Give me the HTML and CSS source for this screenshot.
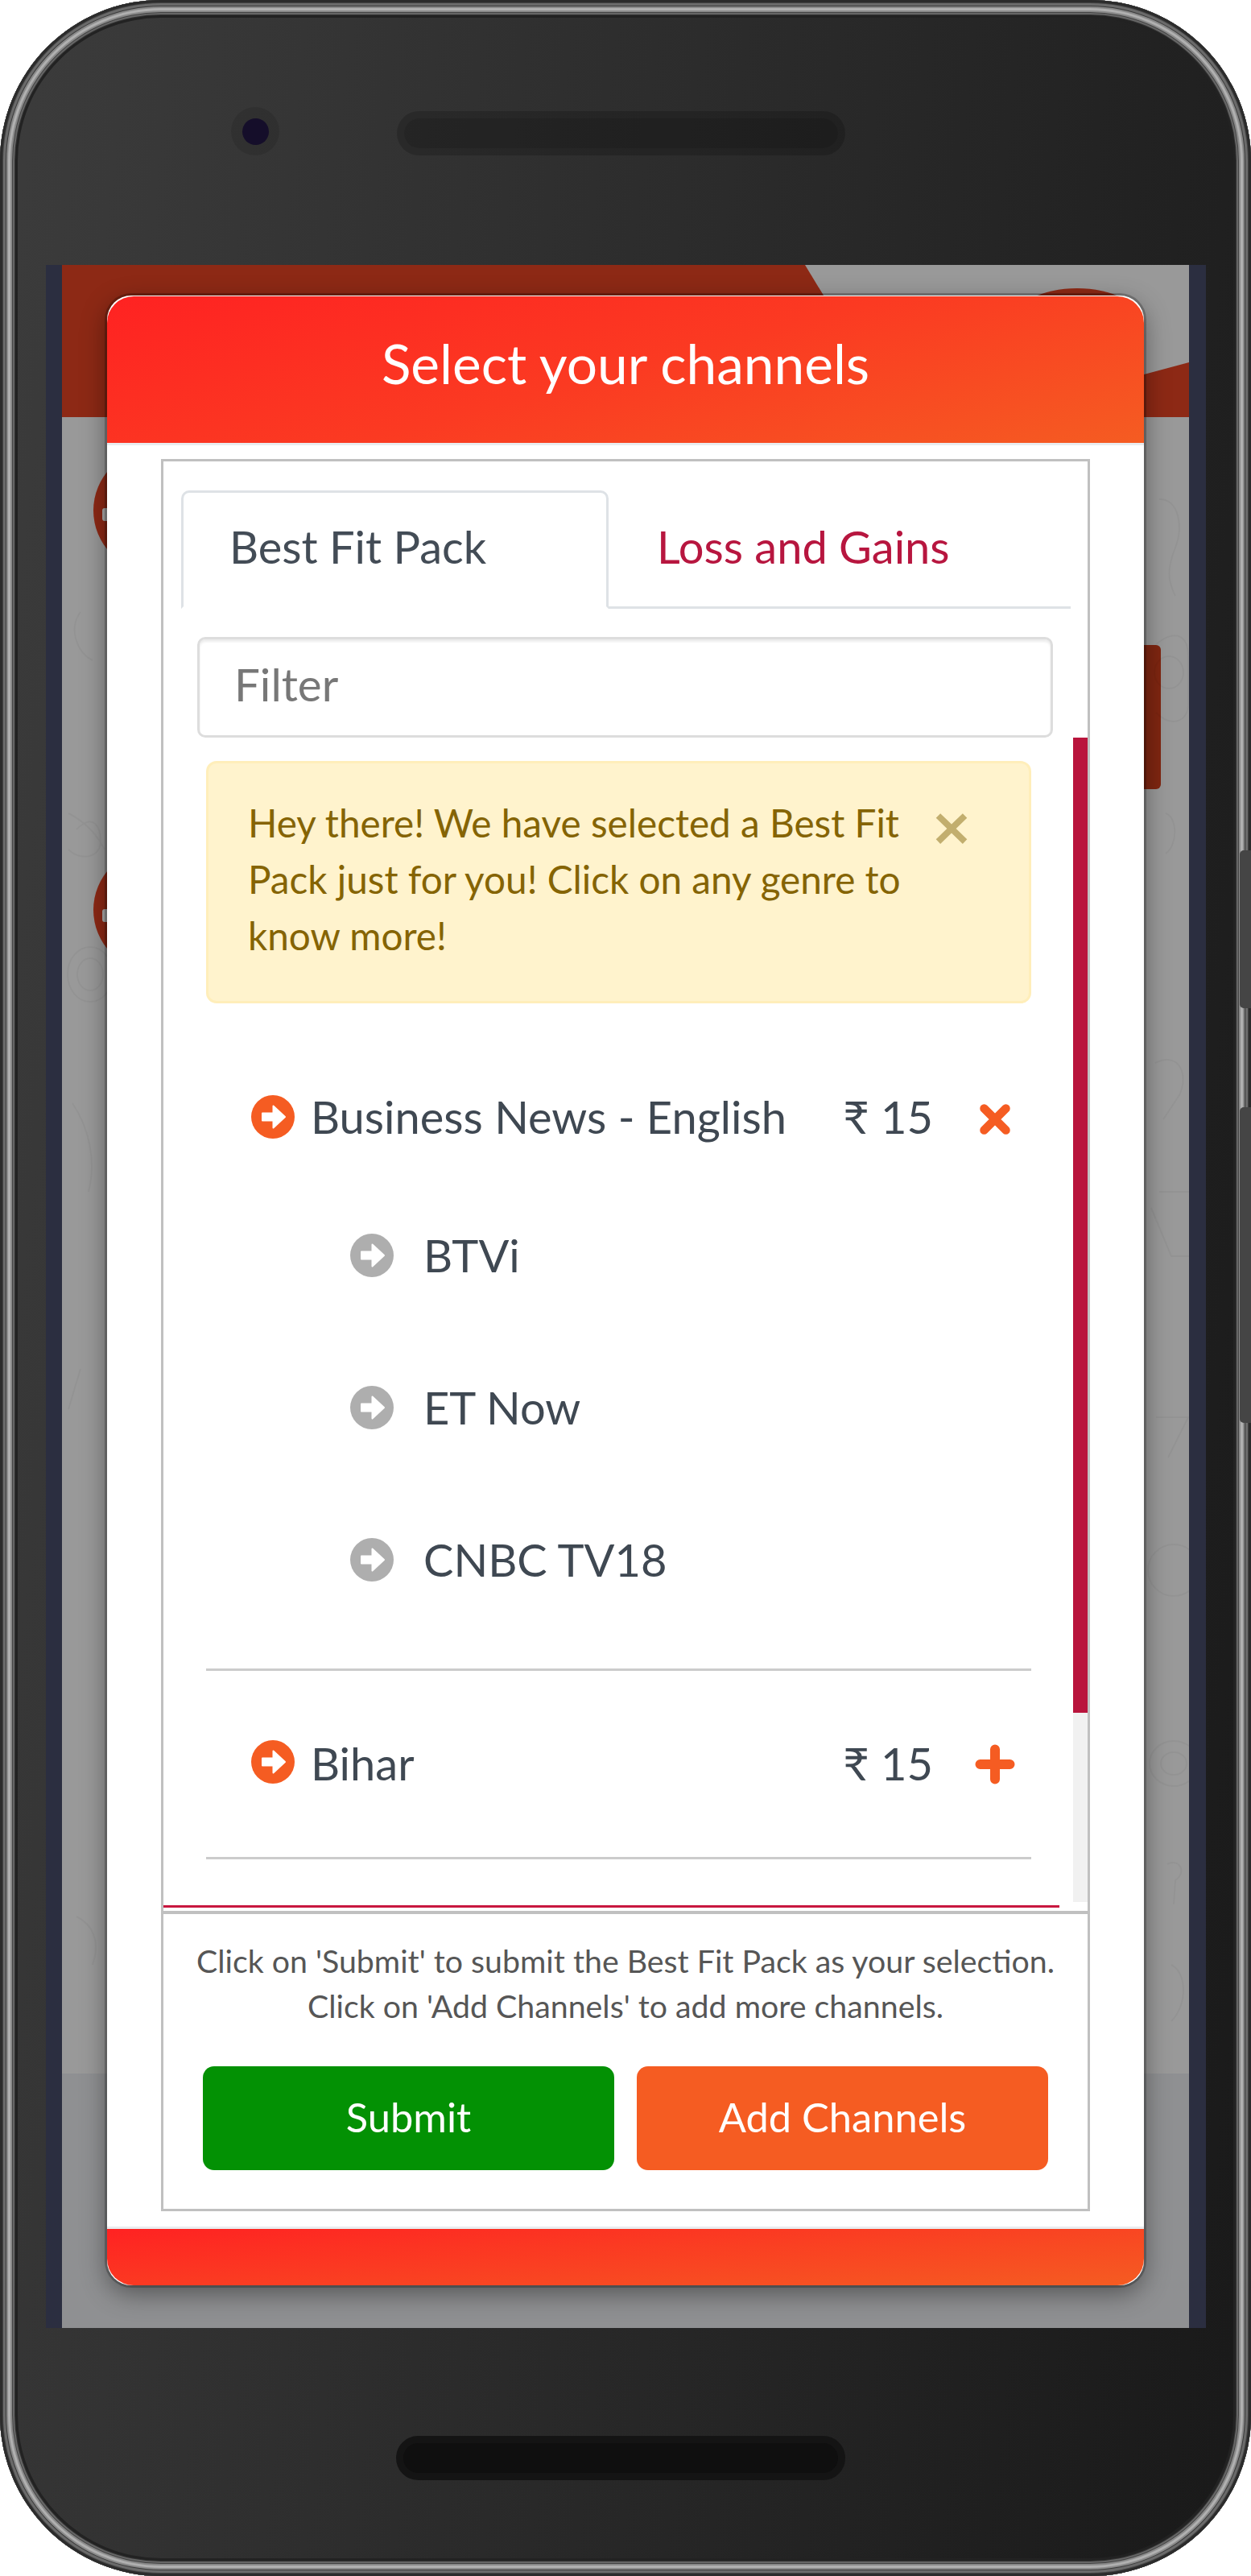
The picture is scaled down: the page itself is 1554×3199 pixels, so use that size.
FILE: index.html
```html
<!DOCTYPE html>
<html lang="en">
<head>
<meta charset="utf-8">
<title>Select your channels</title>
<link rel="stylesheet" href="styles.css">
</head>
<body>
<svg class="defs" width="0" height="0" aria-hidden="true">
  <symbol id="arrow" viewBox="0 0 54 54">
    <circle cx="27" cy="27" r="27" fill="currentColor"/>
    <path d="M14 22.5H27.5V13.5L42 27L27.5 40.5V31.5H14Z" fill="#fff" stroke="#fff" stroke-width="2" stroke-linejoin="round"/>
  </symbol>
  <symbol id="times" viewBox="0 0 40 40">
    <path d="M6.5 6.5L33.500 33.500M33.500 6.500L6.500 33.500" fill="none" stroke="currentColor" stroke-width="10.500" stroke-linecap="round"/>
  </symbol>
  <symbol id="plus" viewBox="0 0 50 50">
    <path d="M6.500 25H43.500M25 6.500V43.500" fill="none" stroke="currentColor" stroke-width="12" stroke-linecap="round"/>
  </symbol>
</svg>

<div class="phone">
  <div class="side-key side-key-a"></div>
  <div class="side-key side-key-b"></div>

  <div class="bezel-top">
    <div class="camera"><div class="lens"></div></div>
    <div class="speaker"></div>
  </div>

  <div class="screen">
    <svg class="backdrop" viewBox="77 329 1400 2562" aria-hidden="true">
      <rect x="77" y="329" width="1400" height="2562" fill="#999"/>
      <rect x="77" y="2575" width="1400" height="316" fill="#8f9092"/>
      <rect x="77" y="329" width="1400" height="189" fill="#8d2915"/>
      <polygon points="1000,329 1477,329 1477,450 1130,543" fill="#999"/>
      <ellipse cx="1338" cy="400" rx="80" ry="42" fill="#8d2915"/>
      <circle cx="192" cy="634" r="76" fill="#8d2915"/>
      <circle cx="192" cy="1130" r="76" fill="#8d2915"/>
      <rect x="127" y="631" width="10" height="16" rx="3" fill="#aaa"/>
      <rect x="127" y="1129" width="10" height="16" rx="3" fill="#aaa"/>
      <rect x="1400" y="801" width="42" height="179" rx="6" fill="#7f2611"/>
      <g fill="none" stroke="#000" stroke-opacity=".035" stroke-width="2">
        <path d="M85 1010c20 10 35 25 45 45M100 760c-15 20-5 50 15 60M95 1030c20-20 30-5 30 15s-25 25-40 10"/>
        <ellipse cx="112" cy="1210" rx="28" ry="34"/>
        <ellipse cx="112" cy="1210" rx="16" ry="20"/>
        <path d="M90 1370c20 30 30 70 20 110M100 1700l-15 50M95 2380c20 10 30 30 20 60"/>
        <path d="M1440 620c25 0 30 35 20 60s-10 40 0 60"/>
        <path d="M1436 800c25-20 40-10 40 15v60c0 20-20 30-40 10"/>
        <ellipse cx="1452" cy="835" rx="18" ry="20"/>
        <path d="M1448 1010c15 5 15 40 0 50M1435 1320c30-15 42 15 30 40l-20 30"/>
        <path d="M1440 1480h40M1430 1500l25 60h25M1436 1760h40l-25 50"/>
        <ellipse cx="1458" cy="1950" rx="32" ry="32"/>
        <ellipse cx="1458" cy="2190" rx="30" ry="28"/>
        <ellipse cx="1458" cy="2190" rx="16" ry="14"/>
        <path d="M1455 2440c20 10 20 50 0 70M1450 2315c15-8 25 10 10 20l-2 30"/>
      </g>
    </svg>

    <div class="modal">
      <header class="modal-head">Select your channels</header>
      <div class="modal-body">
        <section class="box">
          <nav class="tabs">
            <a class="tab tab-active">Best Fit Pack</a>
            <a class="tab">Loss and Gains</a>
          </nav>
          <input class="filter" type="text" placeholder="Filter">
          <div class="list">
            <div class="alert">
              <p class="alert-text">Hey there! We have selected a Best Fit Pack just for you! Click on any genre to know more!</p>
              <svg class="alert-close" viewBox="0 0 40 40" aria-hidden="true"><path d="M3 3L37 36M37 3L3 36"/></svg>
            </div>

            <div class="row row-first">
              <svg class="dot"><use href="#arrow"/></svg>
              <span class="row-name">Business News - English</span>
              <span class="price">₹ 15</span>
              <svg class="action action-times"><use href="#times"/></svg>
            </div>
            <div class="sub"><svg class="dot dot-grey"><use href="#arrow"/></svg><span>BTVi</span></div>
            <div class="sub"><svg class="dot dot-grey"><use href="#arrow"/></svg><span>ET Now</span></div>
            <div class="sub"><svg class="dot dot-grey"><use href="#arrow"/></svg><span>CNBC TV18</span></div>
            <hr class="rule rule-first">
            <div class="row row-second">
              <svg class="dot"><use href="#arrow"/></svg>
              <span class="row-name">Bihar</span>
              <span class="price">₹ 15</span>
              <svg class="action"><use href="#plus"/></svg>
            </div>
            <hr class="rule">

            <div class="scroll-y"><div class="scroll-y-thumb"></div></div>
            <div class="scroll-x"></div>
          </div>
          <footer class="box-foot">
            <p class="hint">Click on 'Submit' to submit the Best Fit Pack as your selection.<br>Click on 'Add Channels' to add more channels.</p>
            <div class="actions">
              <button class="btn btn-green">Submit</button>
              <button class="btn btn-orange">Add Channels</button>
            </div>
          </footer>
        </section>
      </div>
      <div class="modal-foot"></div>
    </div>
  </div>

  <div class="bezel-bottom">
    <div class="speaker speaker-low"></div>
  </div>
</div>
</body>
</html>
```

FILE: styles.css
```css
* { box-sizing: border-box; }

html, body {
  margin: 0;
  padding: 0;
  background: #fff;
}

body {
  width: 1554px;
  height: 3199px;
  overflow: hidden;
  font-family: "Lato", "DejaVu Sans", sans-serif;
  color: #3f4852;
}

.defs { position: absolute; }

/* Phone shell */
.phone {
  position: relative;
  display: flex;
  flex-direction: column;
  width: 1554px;
  height: 3199px;
  border-radius: 200px;
  background: linear-gradient(97deg, #3c3c3c 0%, #2c2c2c 45%, #191919 100%);
}

.phone::after {
  content: "";
  position: absolute;
  inset: 0;
  border-radius: 200px;
  pointer-events: none;
  box-shadow:
    inset 0 0 0 3px #2b2b2b,
    inset 0 0 0 4px #444,
    inset 0 0 0 7px #6a6a6a,
    inset 0 0 0 8px #3a3a3a,
    inset 0 0 0 10px #8a8a8a,
    inset 0 0 0 13px #b0b0b0,
    inset 0 0 0 15px #8a8a8a,
    inset 0 0 0 16px #444,
    inset 0 0 0 18px #666,
    inset 0 0 0 19px #333,
    inset 0 0 0 22px #222;
}

.side-key {
  position: absolute;
  right: 0;
  z-index: 2;
  width: 14px;
  background: #454545;
  border-radius: 5px 0 0 5px;
}
.side-key-a { top: 1056px; height: 196px; }
.side-key-b { top: 1375px; height: 392px; }

.bezel-top {
  flex: none;
  height: 329px;
  padding: 138px 0 0 287px;
  display: flex;
  align-items: flex-start;
}

.camera {
  width: 60px;
  height: 60px;
  margin-top: -5px;
  border-radius: 50%;
  background: rgba(0, 0, 0, .1);
  display: flex;
  align-items: center;
  justify-content: center;
}
.lens {
  width: 33px;
  height: 33px;
  border-radius: 50%;
  background: #150e2a;
}

.speaker {
  width: 557px;
  height: 55px;
  margin-left: 146px;
  border-radius: 28px;
  border: 9px solid rgba(0, 0, 0, .18);
  background: rgba(0, 0, 0, .27);
  background-clip: padding-box;
}

.bezel-bottom {
  flex: none;
  height: 308px;
  padding: 134px 0 0 492px;
}
.speaker-low {
  width: 558px;
  margin-left: 0;
  background: #0f0f0f;
  border: 9px solid #141414;
}

/* Screen */
.screen {
  position: relative;
  flex: none;
  width: 1441px;
  height: 2562px;
  margin-left: 57px;
  padding: 38px 21px 0 20px;
  background: #2b2e40;
}

.backdrop {
  position: absolute;
  left: 20px;
  top: 0;
  width: 1400px;
  height: 2562px;
}

/* Modal */
.modal {
  position: relative;
  width: 1288px;
  height: 2471px;
  margin-left: 56px;
  padding-top: 1px;
  border-radius: 30px;
  background: #fff;
  display: flex;
  flex-direction: column;
  box-shadow: 0 10px 32px rgba(0, 0, 0, .42), 0 0 0 3px rgba(0, 0, 0, .22);
}

.modal-head {
  flex: none;
  height: 182px;
  border-radius: 33px 33px 0 0;
  background: linear-gradient(165deg, #ff2222 0%, #fb3a22 50%, #f55c22 100%);
  color: #fff;
  font-size: 67.600px;
  line-height: 166px;
  text-align: center;
}

.modal-body {
  flex: 1;
  border-top: 3px solid #e9ecef;
  padding: 17px 0 0 67px;
}

.modal-foot {
  flex: none;
  height: 73px;
  border-top: 3px solid #e9ecef;
  border-radius: 0 0 33px 33px;
  background: linear-gradient(175deg, #ff2222 0%, #f55c22 100%);
  background-clip: padding-box;
}

.box {
  width: 1154px;
  height: 2176px;
  border: 3px solid #c0c0c0;
  display: flex;
  flex-direction: column;
}

/* Tabs */
.tabs {
  flex: none;
  display: flex;
  width: 1105px;
  margin: 36px 0 0 22px;
  border-bottom: 3px solid #dee2e6;
  font-size: 56px;
}

.tab {
  margin-bottom: -3px;
  padding: 26px 57px 33px;
  height: 147px;
  line-height: 82px;
  border: 3px solid transparent;
  border-radius: 10px 10px 0 0;
  color: #b7163f;
}

.tab-active {
  width: 531px;
  color: #434c56;
  background: #fff;
  border-color: #dee2e6 #dee2e6 #fff;
}

.filter {
  flex: none;
  display: block;
  width: 1063px;
  height: 125px;
  margin: 35px 0 0 42px;
  padding: 0 43px 10px;
  border: 3px solid #ddd;
  border-radius: 10px;
  box-shadow: inset 0 3px 3px rgba(0, 0, 0, .08);
  font: 56.500px "Lato", sans-serif;
  color: #495057;
  outline: none;
}
.filter::placeholder { color: #777; opacity: 1; }

/* Channel list */
.list {
  position: relative;
  flex: none;
  height: 1457px;
  overflow: hidden;
}

.alert {
  display: flex;
  align-items: flex-start;
  width: 1025px;
  height: 301px;
  margin: 29px 0 0 53px;
  padding: 39px 0 0 49px;
  background: #fff3cd;
  border: 3px solid #ffeeba;
  border-radius: 13px;
  color: #856404;
  font-size: 47.700px;
  line-height: 70px;
}

.alert-text {
  flex: none;
  width: 820px;
  margin: 0;
}

.alert-close {
  flex: none;
  width: 40px;
  height: 39px;
  margin: 23px 0 0 34px;
}
.alert-close path {
  fill: none;
  stroke: #c2ae6e;
  stroke-width: 8;
}

.row {
  display: flex;
  align-items: center;
  width: 1148px;
  padding: 0 90px 0 109px;
  font-size: 56px;
}
.row-first { height: 148px; margin-top: 70px; }
.row-second { height: 231px; }

.dot {
  flex: none;
  width: 54px;
  height: 54px;
  margin-bottom: 6px;
  color: #f55c22;
}
.dot-grey { color: #aeaeae; margin-bottom: 0; }

.row-name {
  flex: 1;
  margin-left: 20px;
}

.row-first .row-name,
.row-first .price { margin-bottom: 7px; }
.row-second .row-name,
.row-second .price { margin-bottom: 3px; }

.price { flex: none; }

.action {
  flex: none;
  width: 50px;
  height: 50px;
  margin-left: 52px;
  color: #f55c22;
}
.action-times {
  width: 40px;
  height: 40px;
  margin: 0 5px 0 57px;
}

.sub {
  display: flex;
  align-items: center;
  height: 189px;
  padding-left: 232px;
  font-size: 56px;
}
.sub span { margin-left: 37px; }

.rule {
  width: 1025px;
  height: 3px;
  margin: 0 0 0 53px;
  border: 0;
  background: #ccc;
}
.rule-first { margin-top: 41px; }

.scroll-y {
  position: absolute;
  right: 0;
  top: 0;
  width: 18px;
  height: 1446px;
  background: #f1f1f1;
}
.scroll-y-thumb {
  height: 1211px;
  background: #b9143c;
}

.scroll-x {
  position: absolute;
  left: 0;
  bottom: 4px;
  width: 1113px;
  height: 3px;
  background: #c8173f;
}

/* Box footer */
.box-foot {
  flex: 1;
  border-top: 4px solid #c0c0c0;
  padding: 30px 0 0;
}

.hint {
  margin: 0;
  color: #565656;
  font-size: 39.300px;
  line-height: 56px;
  text-align: center;
  white-space: nowrap;
}

.actions {
  display: flex;
  gap: 28px;
  margin: 47px 0 0 49px;
}

.btn {
  width: 511px;
  height: 129px;
  padding: 0 0 4px;
  border: 0;
  border-radius: 14px;
  color: #fff;
  font: 50.600px "Lato", sans-serif;
}
.btn-green { background: #039104; }
.btn-orange { background: #f55c22; }
```
